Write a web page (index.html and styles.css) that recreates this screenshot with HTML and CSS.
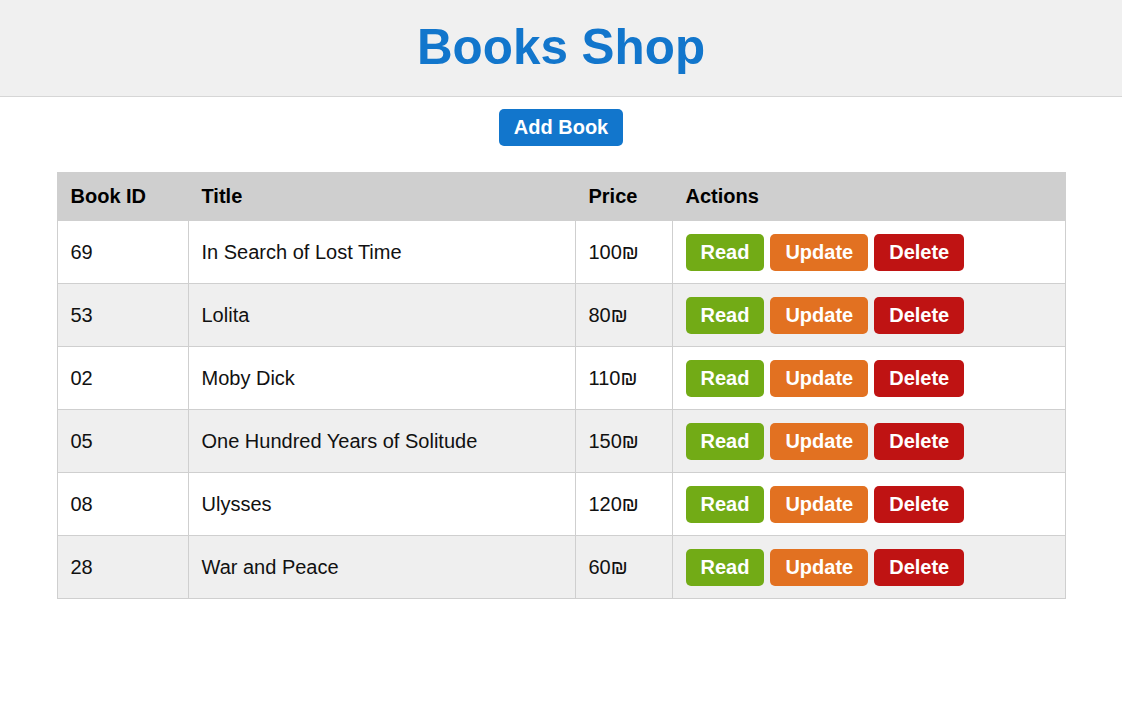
FILE: index.html
```html
<!DOCTYPE html>
<html>
<head>
<meta charset="utf-8">
<title>Books Shop</title>
<link rel="stylesheet" href="styles.css">
</head>
<body>
<header class="page-header">
  <h1 class="title">Books Shop</h1>
</header>
<main class="content">
  <div class="toolbar">
    <button class="btn btn-add">Add Book</button>
  </div>
  <table class="books">
    <colgroup>
      <col class="col-id">
      <col class="col-title">
      <col class="col-price">
      <col class="col-actions">
    </colgroup>
    <thead>
      <tr><th>Book ID</th><th>Title</th><th>Price</th><th>Actions</th></tr>
    </thead>
    <tbody>
      <tr><td>69</td><td>In Search of Lost Time</td><td>100₪</td><td><div class="actions"><button class="btn btn-read">Read</button><button class="btn btn-update">Update</button><button class="btn btn-delete">Delete</button></div></td></tr>
      <tr><td>53</td><td>Lolita</td><td>80₪</td><td><div class="actions"><button class="btn btn-read">Read</button><button class="btn btn-update">Update</button><button class="btn btn-delete">Delete</button></div></td></tr>
      <tr><td>02</td><td>Moby Dick</td><td>110₪</td><td><div class="actions"><button class="btn btn-read">Read</button><button class="btn btn-update">Update</button><button class="btn btn-delete">Delete</button></div></td></tr>
      <tr><td>05</td><td>One Hundred Years of Solitude</td><td>150₪</td><td><div class="actions"><button class="btn btn-read">Read</button><button class="btn btn-update">Update</button><button class="btn btn-delete">Delete</button></div></td></tr>
      <tr><td>08</td><td>Ulysses</td><td>120₪</td><td><div class="actions"><button class="btn btn-read">Read</button><button class="btn btn-update">Update</button><button class="btn btn-delete">Delete</button></div></td></tr>
      <tr><td>28</td><td>War and Peace</td><td>60₪</td><td><div class="actions"><button class="btn btn-read">Read</button><button class="btn btn-update">Update</button><button class="btn btn-delete">Delete</button></div></td></tr>
    </tbody>
  </table>
</main>
</body>
</html>
```

FILE: styles.css
```css
* { box-sizing: border-box; }

html, body {
  margin: 0;
  padding: 0;
  background: #ffffff;
  font-family: "Liberation Sans", Arial, sans-serif;
  font-size: 20px;
  color: #111111;
}

.page-header {
  background: #f0f0f0;
  border-bottom: 1px solid #d6d6d6;
  padding: 18px 0 20px;
  text-align: center;
}

.title {
  margin: 0;
  font-size: 49.4px;
  line-height: 58px;
  font-weight: bold;
  color: #1276cc;
}

.content {
  display: flex;
  flex-direction: column;
  align-items: center;
}

.toolbar {
  display: flex;
  justify-content: center;
  padding: 12px 0 26px;
}

.btn {
  font-family: "Liberation Sans", Arial, sans-serif;
  font-size: 20px;
  font-weight: bold;
  line-height: 23px;
  color: #ffffff;
  border: none;
  border-radius: 5px;
  padding: 7px 15px;
  margin: 0;
  cursor: pointer;
}

.btn-add { background: #1276cc; }
.btn-read { background: #72ab16; }
.btn-update { background: #e27121; }
.btn-delete { background: #bf1313; }

.books {
  width: 1008px;
  border-collapse: collapse;
  table-layout: fixed;
}

.col-id { width: 131px; }
.col-title { width: 387px; }
.col-price { width: 97px; }
.col-actions { width: 393px; }

.books th,
.books td {
  border: 1px solid #cfcfcf;
  padding: 12.5px 13px;
  text-align: left;
  line-height: 23px;
}

.books th {
  background: #cfcfcf;
  font-weight: bold;
  color: #000000;
  padding-top: 12px;
  padding-bottom: 12px;
}

.books td {
  color: #111111;
}

.books tbody tr:nth-child(even) td {
  background: #efefef;
}

.actions {
  display: flex;
  gap: 6px;
}
```
